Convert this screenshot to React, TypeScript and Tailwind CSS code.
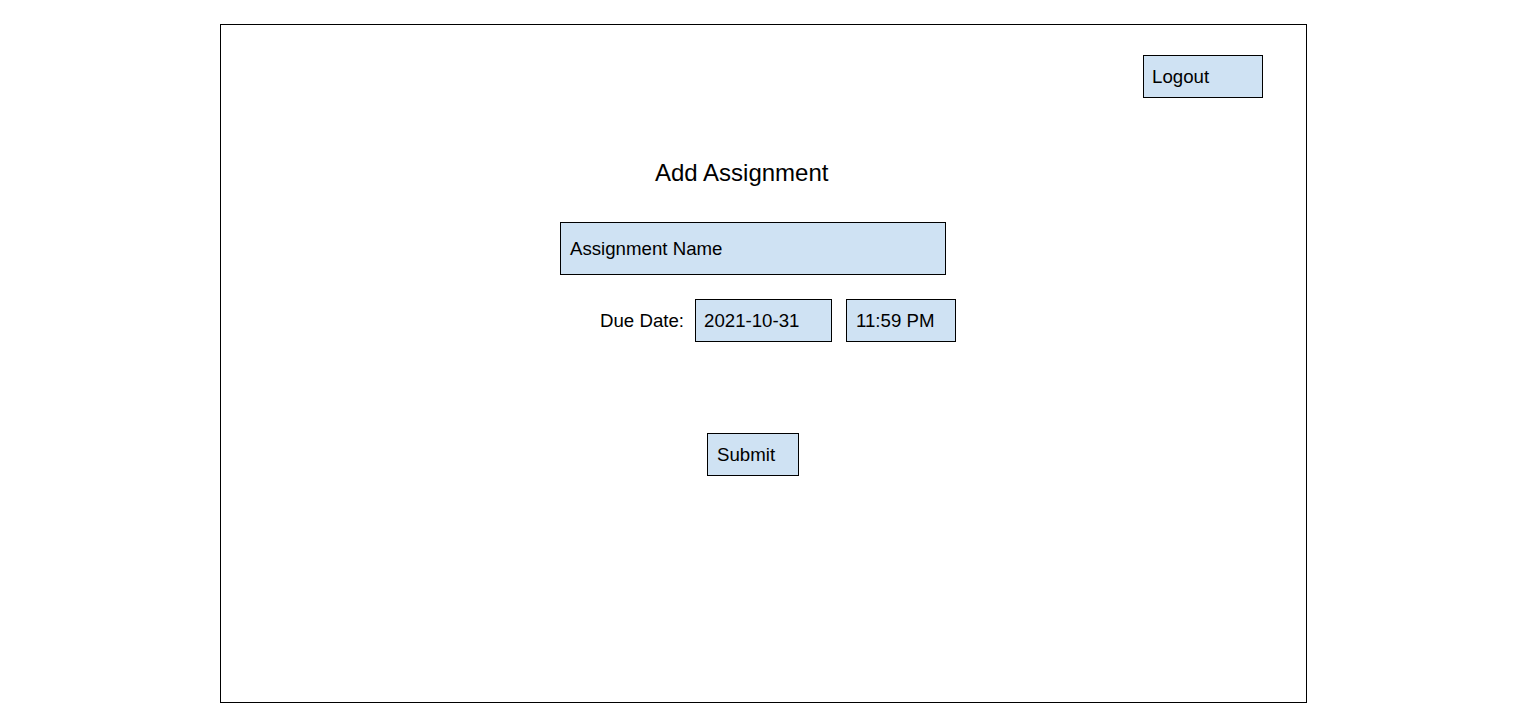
import React from 'react'

const box = 'flex items-center border border-black bg-[#cfe2f3] text-[18.67px] text-black'

const App: React.FC = () => {
  return (
    <div className="min-h-[727px] bg-white pl-[220px] pt-[24px] font-['Liberation_Sans',Arial,sans-serif]">
      <div className="flex h-[679px] w-[1087px] flex-col items-start border border-black">
        {/* Top bar */}
        <div className="mt-[30px] flex w-full justify-end pr-[43px]">
          <div className={`${box} h-[43px] w-[120px] pl-[8px]`}>Logout</div>
        </div>

        <h1 className="ml-[434px] mt-[61px] text-[24px] leading-[28px] text-black">Add Assignment</h1>

        <div className={`${box} ml-[339px] mt-[35px] h-[53px] w-[386px] pl-[9px]`}>Assignment Name</div>

        {/* Due date row */}
        <div className="ml-[339px] mt-[24px] flex items-center">
          <span className="w-[124px] text-right text-[18.67px] text-black">Due Date:</span>
          <div className={`${box} ml-[11px] h-[43px] w-[137px] pl-[8px]`}>2021-10-31</div>
          <div className={`${box} ml-[14px] h-[43px] w-[110px] pl-[9px]`}>11:59 PM</div>
        </div>

        <div className={`${box} ml-[486px] mt-[91px] h-[43px] w-[92px] pl-[9px]`}>Submit</div>
      </div>
    </div>
  )
}

export default App
